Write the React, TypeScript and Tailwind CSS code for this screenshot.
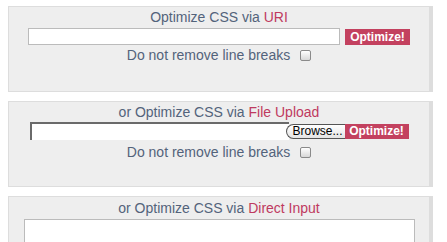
import React from "react";

const font = "font-['Liberation_Sans',Arial,sans-serif]";

function Heading({ lead, accent }: { lead: string; accent: string }) {
  return (
    <div className="text-[14px] leading-[17px] text-[#53637b]">
      {lead} <span className="text-[#bf3a60]">{accent}</span>
    </div>
  );
}

function LineBreaks({ className = "" }: { className?: string }) {
  return (
    <label className={`flex items-center gap-[10px] text-[14px] leading-[17px] text-[#53637b] ${className}`}>
      <span>Do not remove line breaks</span>
      <span className="inline-block h-[11px] w-[11px] rounded-[2px] border border-[#8a8a8a] bg-gradient-to-b from-[#ffffff] to-[#d8d8d8]" />
    </label>
  );
}

function OptimizeButton({ className = "" }: { className?: string }) {
  return (
    <button
      type="button"
      className={`flex items-center justify-center bg-[#c3415f] text-[12px] font-bold leading-none text-white ${className}`}
    >
      Optimize!
    </button>
  );
}

export default function App() {
  return (
    <div className={`min-h-[242px] bg-white pl-2 pr-[14px] pt-[6px] ${font}`}>
      <div className="flex flex-col gap-[9px]">
        {/* URI */}
        <section className="flex h-[86px] flex-col items-center border border-r-4 border-[#dddddd] bg-[#eeeeee] pt-[2px]">
          <Heading lead="Optimize CSS via" accent="URI" />
          <div className="mt-[2px] flex items-center gap-[5px]">
            <div className="h-[17px] w-[312px] border border-[#bbbbbb] bg-white" />
            <OptimizeButton className="h-[16px] w-[65px]" />
          </div>
          <LineBreaks className="mt-[2px]" />
        </section>

        {/* File upload */}
        <section className="flex h-[86px] flex-col items-center border border-r-4 border-[#dddddd] bg-[#eeeeee] pt-[2px]">
          <Heading lead="or Optimize CSS via" accent="File Upload" />
          <div className="mt-[1px] flex items-center">
            <div className="h-[18px] w-[259px] border-l-2 border-t-2 border-[#6a6a6a] bg-white" />
            <div className="-ml-[3px] flex h-[15px] w-[60px] items-center rounded-l-full border border-r-0 border-[#555555] bg-gradient-to-b from-[#ffffff] to-[#e4e4e4] pl-[6px] text-[12px] leading-none text-black">
              Browse...
            </div>
            <OptimizeButton className="-ml-[1px] h-[15px] w-[64px]" />
          </div>
          <LineBreaks className="mt-[4px]" />
        </section>

        {/* Direct input */}
        <section className="flex h-[80px] flex-col items-center border border-r-4 border-[#dddddd] bg-[#eeeeee] pt-[3px]">
          <Heading lead="or Optimize CSS via" accent="Direct Input" />
          <div className="mt-[2px] h-[60px] w-[391px] border border-[#bbbbbb] bg-white" />
        </section>
      </div>
    </div>
  );
}
